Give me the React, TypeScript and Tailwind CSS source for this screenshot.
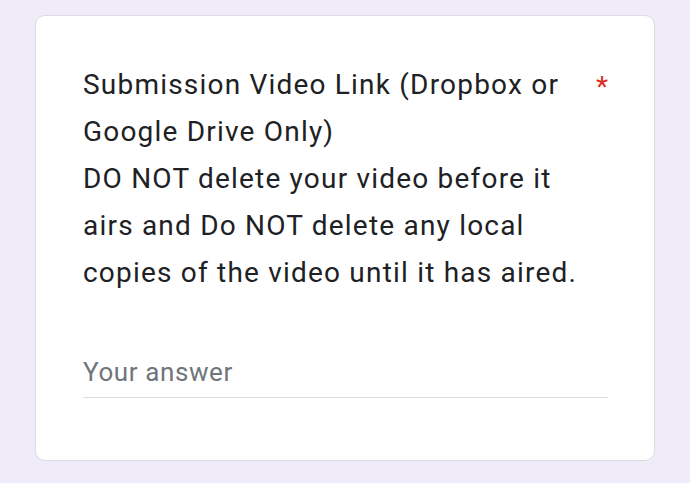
import React from 'react';

const App: React.FC = () => {
  return (
    <div className="min-h-screen w-full bg-[#f0ebf8] px-[35px] pt-[15px] font-['Roboto',sans-serif]">
      {/* question card */}
      <div className="w-[620px] rounded-[10px] border border-[#dadce0] bg-white pl-[47px] pr-[46px] pt-[45px] pb-[62px]">
        <div className="flex items-start">
          <div className="flex-1 pr-[12px] text-[28px] leading-[47px] tracking-[1.2px] text-[#202124]">
            <div>Submission Video Link (Dropbox or Google Drive Only)</div>
            <div>DO NOT delete your video before it airs and Do NOT delete any local copies of the video until it has aired.</div>
          </div>
          <span className="mt-[2px] text-[28px] leading-[47px] text-[#d93025]">*</span>
        </div>

        <div className="mt-[58px] border-b border-[#dadce0] pb-[7px] text-[26px] leading-[36px] tracking-[0.6px] text-[#70757a]">
          Your answer
        </div>
      </div>
    </div>
  );
};

export default App;
